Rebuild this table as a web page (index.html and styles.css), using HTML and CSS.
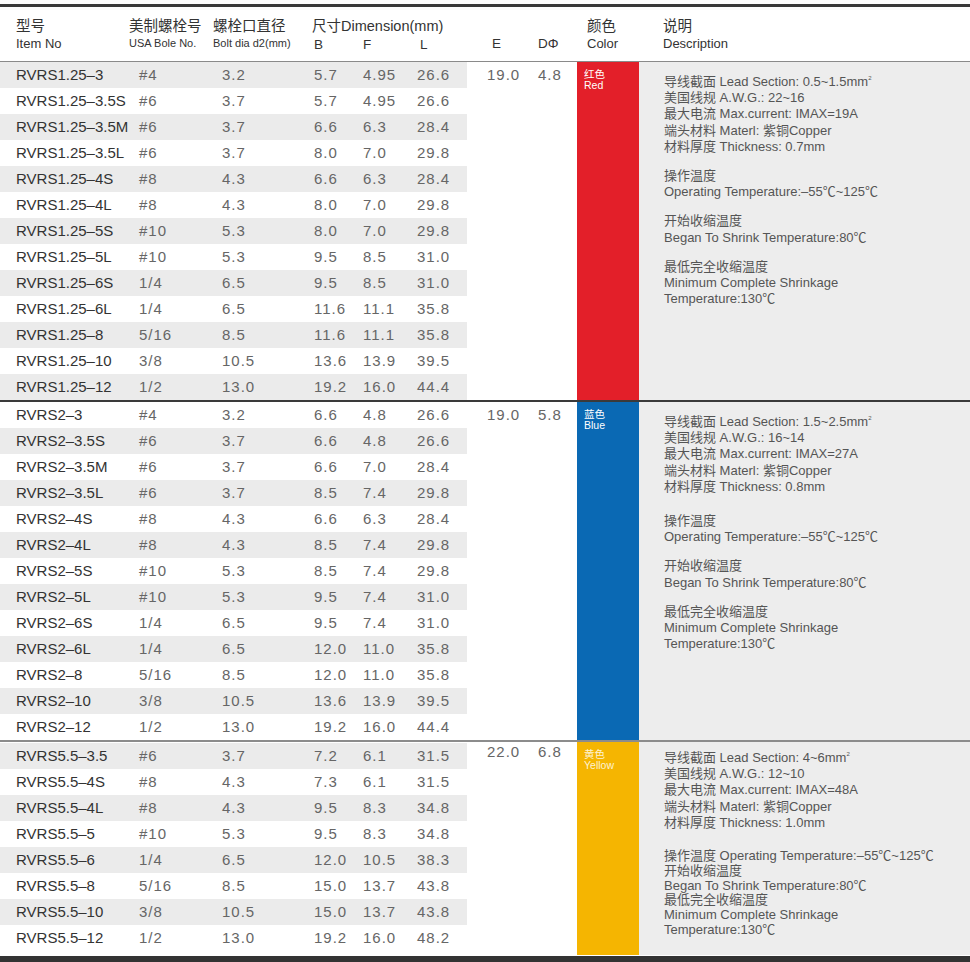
FILE: index.html
```html
<!DOCTYPE html>
<html lang="zh">
<head>
<meta charset="utf-8">
<title>RVRS</title>
<link rel="stylesheet" href="styles.css">
</head>
<body>
<div class="sheet">
  <div class="topline"></div>
  <div class="head">
    <div class="hc hc-item"><span class="zh">型号</span><span class="en">Item No</span></div>
    <div class="hc hc-usa"><span class="zh">美制螺栓号</span><span class="en small">USA Bole No.</span></div>
    <div class="hc hc-bolt"><span class="zh">螺栓口直径</span><span class="en small">Bolt dia d2(mm)</span></div>
    <div class="hc hc-dim"><span class="zh">尺寸Dimension(mm)</span>
      <div class="bfl"><span class="b">B</span><span class="f">F</span><span class="l">L</span></div>
    </div>
    <div class="hc hc-e"><span class="zh">&nbsp;</span><span class="en">E</span></div>
    <div class="hc hc-d"><span class="zh">&nbsp;</span><span class="en">DΦ</span></div>
    <div class="hc hc-color"><span class="zh">颜色</span><span class="en">Color</span></div>
    <div class="hc hc-desc"><span class="zh">说明</span><span class="en">Description</span></div>
  </div>

  <div class="group g1">
    <div class="rows odd">
      <div class="row"><span class="item">RVRS1.25–3</span><span>#4</span><span>3.2</span><span>5.7</span><span>4.95</span><span>26.6</span></div>
      <div class="row"><span class="item">RVRS1.25–3.5S</span><span>#6</span><span>3.7</span><span>5.7</span><span>4.95</span><span>26.6</span></div>
      <div class="row"><span class="item">RVRS1.25–3.5M</span><span>#6</span><span>3.7</span><span>6.6</span><span>6.3</span><span>28.4</span></div>
      <div class="row"><span class="item">RVRS1.25–3.5L</span><span>#6</span><span>3.7</span><span>8.0</span><span>7.0</span><span>29.8</span></div>
      <div class="row"><span class="item">RVRS1.25–4S</span><span>#8</span><span>4.3</span><span>6.6</span><span>6.3</span><span>28.4</span></div>
      <div class="row"><span class="item">RVRS1.25–4L</span><span>#8</span><span>4.3</span><span>8.0</span><span>7.0</span><span>29.8</span></div>
      <div class="row"><span class="item">RVRS1.25–5S</span><span>#10</span><span>5.3</span><span>8.0</span><span>7.0</span><span>29.8</span></div>
      <div class="row"><span class="item">RVRS1.25–5L</span><span>#10</span><span>5.3</span><span>9.5</span><span>8.5</span><span>31.0</span></div>
      <div class="row"><span class="item">RVRS1.25–6S</span><span>1/4</span><span>6.5</span><span>9.5</span><span>8.5</span><span>31.0</span></div>
      <div class="row"><span class="item">RVRS1.25–6L</span><span>1/4</span><span>6.5</span><span>11.6</span><span>11.1</span><span>35.8</span></div>
      <div class="row"><span class="item">RVRS1.25–8</span><span>5/16</span><span>8.5</span><span>11.6</span><span>11.1</span><span>35.8</span></div>
      <div class="row"><span class="item">RVRS1.25–10</span><span>3/8</span><span>10.5</span><span>13.6</span><span>13.9</span><span>39.5</span></div>
      <div class="row"><span class="item">RVRS1.25–12</span><span>1/2</span><span>13.0</span><span>19.2</span><span>16.0</span><span>44.4</span></div>
    </div>
    <div class="num-e">19.0</div>
    <div class="num-d">4.8</div>
    <div class="swatch red"><span>红色</span><span>Red</span></div>
    <div class="desc">
      <p>导线截面 Lead Section: 0.5~1.5mm<sup>2</sup><br>美国线规 A.W.G.: 22~16<br>最大电流 Max.current: IMAX=19A<br>端头材料 Materl: 紫铜Copper<br>材料厚度 Thickness: 0.7mm</p>
      <p>操作温度<br>Operating Temperature:–55℃~125℃</p>
      <p>开始收缩温度<br>Began To Shrink Temperature:80℃</p>
      <p>最低完全收缩温度<br>Minimum Complete Shrinkage<br>Temperature:130℃</p>
    </div>
  </div>

  <div class="group g2">
    <div class="rows even">
      <div class="row"><span class="item">RVRS2–3</span><span>#4</span><span>3.2</span><span>6.6</span><span>4.8</span><span>26.6</span></div>
      <div class="row"><span class="item">RVRS2–3.5S</span><span>#6</span><span>3.7</span><span>6.6</span><span>4.8</span><span>26.6</span></div>
      <div class="row"><span class="item">RVRS2–3.5M</span><span>#6</span><span>3.7</span><span>6.6</span><span>7.0</span><span>28.4</span></div>
      <div class="row"><span class="item">RVRS2–3.5L</span><span>#6</span><span>3.7</span><span>8.5</span><span>7.4</span><span>29.8</span></div>
      <div class="row"><span class="item">RVRS2–4S</span><span>#8</span><span>4.3</span><span>6.6</span><span>6.3</span><span>28.4</span></div>
      <div class="row"><span class="item">RVRS2–4L</span><span>#8</span><span>4.3</span><span>8.5</span><span>7.4</span><span>29.8</span></div>
      <div class="row"><span class="item">RVRS2–5S</span><span>#10</span><span>5.3</span><span>8.5</span><span>7.4</span><span>29.8</span></div>
      <div class="row"><span class="item">RVRS2–5L</span><span>#10</span><span>5.3</span><span>9.5</span><span>7.4</span><span>31.0</span></div>
      <div class="row"><span class="item">RVRS2–6S</span><span>1/4</span><span>6.5</span><span>9.5</span><span>7.4</span><span>31.0</span></div>
      <div class="row"><span class="item">RVRS2–6L</span><span>1/4</span><span>6.5</span><span>12.0</span><span>11.0</span><span>35.8</span></div>
      <div class="row"><span class="item">RVRS2–8</span><span>5/16</span><span>8.5</span><span>12.0</span><span>11.0</span><span>35.8</span></div>
      <div class="row"><span class="item">RVRS2–10</span><span>3/8</span><span>10.5</span><span>13.6</span><span>13.9</span><span>39.5</span></div>
      <div class="row"><span class="item">RVRS2–12</span><span>1/2</span><span>13.0</span><span>19.2</span><span>16.0</span><span>44.4</span></div>
    </div>
    <div class="num-e">19.0</div>
    <div class="num-d">5.8</div>
    <div class="swatch blue"><span>蓝色</span><span>Blue</span></div>
    <div class="desc">
      <p>导线截面 Lead Section: 1.5~2.5mm<sup>2</sup><br>美国线规 A.W.G.: 16~14<br>最大电流 Max.current: IMAX=27A<br>端头材料 Materl: 紫铜Copper<br>材料厚度 Thickness: 0.8mm</p>
      <p class="gap-lg">操作温度<br>Operating Temperature:–55℃~125℃</p>
      <p>开始收缩温度<br>Began To Shrink Temperature:80℃</p>
      <p>最低完全收缩温度<br>Minimum Complete Shrinkage<br>Temperature:130℃</p>
    </div>
  </div>

  <div class="group g3">
    <div class="rows odd">
      <div class="row"><span class="item">RVRS5.5–3.5</span><span>#6</span><span>3.7</span><span>7.2</span><span>6.1</span><span>31.5</span></div>
      <div class="row"><span class="item">RVRS5.5–4S</span><span>#8</span><span>4.3</span><span>7.3</span><span>6.1</span><span>31.5</span></div>
      <div class="row"><span class="item">RVRS5.5–4L</span><span>#8</span><span>4.3</span><span>9.5</span><span>8.3</span><span>34.8</span></div>
      <div class="row"><span class="item">RVRS5.5–5</span><span>#10</span><span>5.3</span><span>9.5</span><span>8.3</span><span>34.8</span></div>
      <div class="row"><span class="item">RVRS5.5–6</span><span>1/4</span><span>6.5</span><span>12.0</span><span>10.5</span><span>38.3</span></div>
      <div class="row"><span class="item">RVRS5.5–8</span><span>5/16</span><span>8.5</span><span>15.0</span><span>13.7</span><span>43.8</span></div>
      <div class="row"><span class="item">RVRS5.5–10</span><span>3/8</span><span>10.5</span><span>15.0</span><span>13.7</span><span>43.8</span></div>
      <div class="row"><span class="item">RVRS5.5–12</span><span>1/2</span><span>13.0</span><span>19.2</span><span>16.0</span><span>48.2</span></div>
    </div>
    <div class="num-e">22.0</div>
    <div class="num-d">6.8</div>
    <div class="swatch yellow"><span>黄色</span><span>Yellow</span></div>
    <div class="desc">
      <p>导线截面 Lead Section: 4~6mm<sup>2</sup><br>美国线规 A.W.G.: 12~10<br>最大电流 Max.current: IMAX=48A<br>端头材料 Materl: 紫铜Copper<br>材料厚度 Thickness: 1.0mm</p>
      <p class="gap-lg tight">操作温度 Operating Temperature:–55℃~125℃<br>开始收缩温度<br>Began To Shrink Temperature:80℃<br>最低完全收缩温度<br>Minimum Complete Shrinkage<br>Temperature:130℃</p>
    </div>
  </div>
  <div class="bottomline"></div>
</div>
</body>
</html>
```

FILE: styles.css
```css
html, body {
  margin: 0;
  padding: 0;
  background: #ffffff;
}

body {
  font-family: "Liberation Sans", "Noto Sans CJK SC", sans-serif;
  color: #333333;
}

.sheet {
  width: 970px;
  padding-top: 4px;
}

.topline {
  height: 3px;
  background: #3a3a3a;
}

/* header */
.head {
  display: flex;
  height: 54px;
  border-bottom: 1px solid #8a8a8a;
}

.hc {
  display: flex;
  flex-direction: column;
  padding-top: 10px;
  box-sizing: border-box;
  flex: none;
}

.zh {
  font-family: "Liberation Sans", "Noto Sans CJK SC", sans-serif;
  font-size: 14.5px;
  line-height: 18px;
  color: #333333;
  white-space: nowrap;
}

.en {
  font-size: 13px;
  line-height: 17px;
  color: #333333;
  white-space: nowrap;
}

.en.small {
  font-size: 11px;
}

.hc-item { width: 129px; padding-left: 16px; }
.hc-usa { width: 84px; }
.hc-bolt { width: 99px; }
.hc-dim { width: 175px; }
.hc-e { width: 51px; padding-left: 5px; }
.hc-d { width: 39px; }
.hc-color { width: 62px; padding-left: 10px; }
.hc-desc { flex: 1; padding-left: 24px; }

.hc-e .en, .hc-d .en { font-size: 13.5px; }

.bfl {
  display: flex;
  font-size: 13.5px;
  line-height: 19px;
  color: #333333;
  padding-left: 2px;
}

.bfl .b { width: 49px; }
.bfl .f { width: 57px; }

/* groups */
.group {
  display: flex;
  align-items: stretch;
}

.g2 {
  border-top: 2px solid #3a3a3a;
}

.g3 {
  border-top: 2px solid #8c8c8c;
}

.rows {
  width: 467px;
  flex: none;
}

.g3 .rows {
  padding-top: 1px;
  padding-bottom: 4px;
}

.row {
  display: grid;
  grid-template-columns: 139px 83px 92px 49px 54px 50px;
  height: 26px;
  line-height: 26px;
  font-size: 15px;
  color: #666666;
  letter-spacing: 1px;
  white-space: nowrap;
}

.row .item {
  padding-left: 16px;
  color: #333333;
  letter-spacing: 0;
}

.rows.odd .row:nth-child(odd),
.rows.even .row:nth-child(even) {
  background: #ebebeb;
}

.num-e,
.num-d {
  flex: none;
  font-size: 15px;
  line-height: 26px;
  color: #666666;
  letter-spacing: 1px;
}

.num-e {
  width: 51px;
  padding-left: 20px;
}

.num-d {
  width: 39px;
}

.g3 .num-e, .g3 .num-d {
  margin-top: -3px;
}

.swatch {
  width: 48px;
  flex: none;
  display: flex;
  flex-direction: column;
  padding: 7px 7px 0 7px;
  font-size: 10.5px;
  line-height: 11px;
  color: #ffffff;
}

.red { background: #e31f29; }
.blue { background: #0a69b4; }
.yellow { background: #f5b501; color: #fdf2d2; }

.desc {
  flex: 1;
  background: #ededed;
  padding: 12px 0 10px 25px;
  font-size: 13px;
  line-height: 16.2px;
  color: #555555;
}

.g3 .desc {
  padding-top: 8px;
}

.desc p {
  margin: 0;
  white-space: nowrap;
}

.desc p + p {
  margin-top: 13px;
}

.desc p.gap-lg {
  margin-top: 18px;
}

.desc p.tight {
  line-height: 14.8px;
}

.desc sup {
  font-size: 6px;
  line-height: 0;
  vertical-align: 6px;
}

.bottomline {
  margin-top: 1px;
  height: 6px;
  background: #333333;
}
```
